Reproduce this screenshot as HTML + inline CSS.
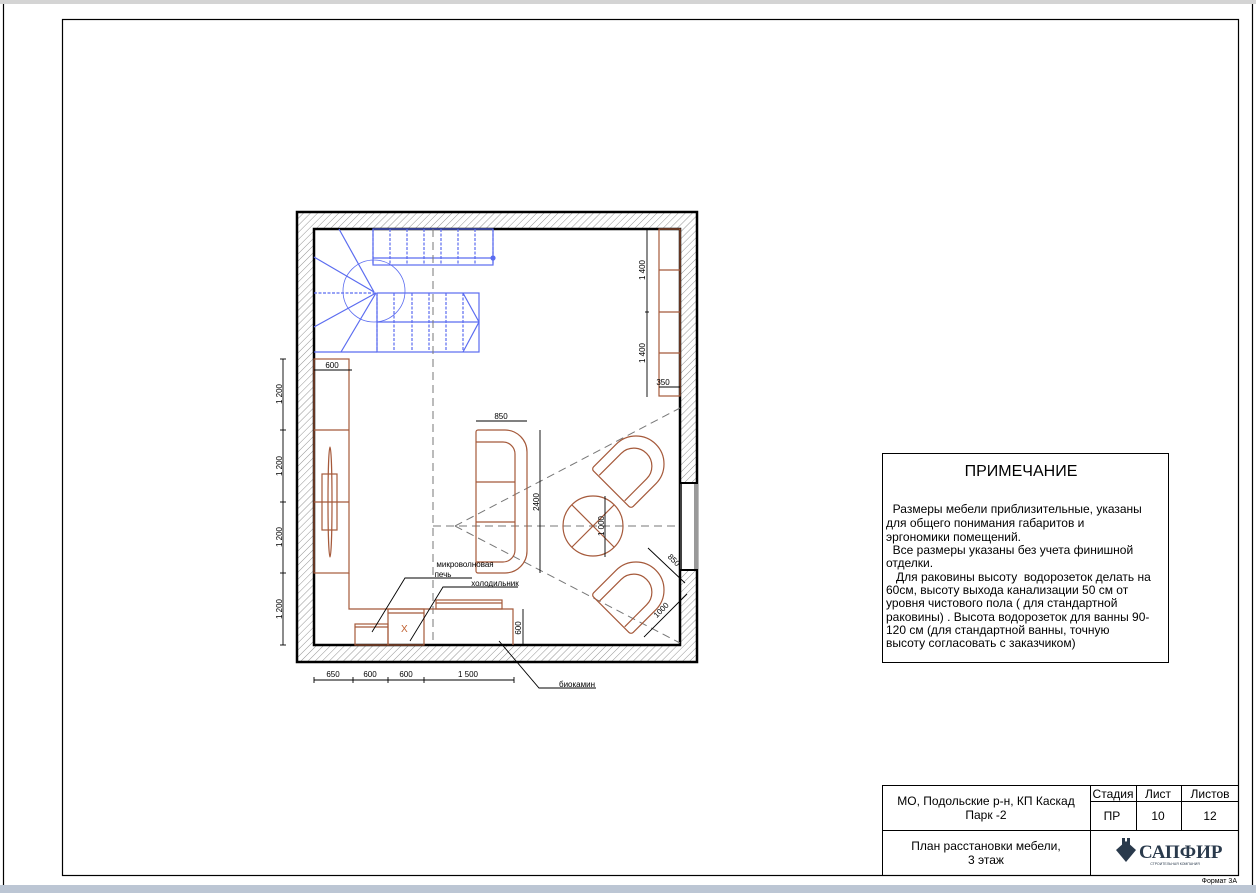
<!DOCTYPE html>
<html><head><meta charset="utf-8"><style>
html,body{margin:0;padding:0;background:#fff;}
svg{display:block;font-family:"Liberation Sans",Arial,sans-serif;}
</style></head><body>
<svg width="1256" height="893" viewBox="0 0 1256 893" xmlns="http://www.w3.org/2000/svg">
<defs>
<pattern id="h" width="5" height="5" patternUnits="userSpaceOnUse" patternTransform="rotate(45)">
<line x1="0" y1="0" x2="0" y2="5" stroke="#777" stroke-width="0.8"/>
</pattern>
</defs>
<rect x="0" y="0" width="1256" height="893" fill="#fff"/>
<rect x="0" y="0" width="1256" height="4" fill="#d4d4d4"/>
<rect x="0" y="885" width="1256" height="8" fill="#bcc6d4"/>
<line x1="3.5" y1="4" x2="3.5" y2="885" stroke="#000" stroke-width="1.2"/>
<line x1="1252.5" y1="4" x2="1252.5" y2="885" stroke="#000" stroke-width="1.2"/>
<rect x="62.5" y="19.5" width="1176" height="856" fill="none" stroke="#000" stroke-width="1.2"/>

<!-- walls -->
<path d="M296,211H698V663H296Z M314,229V645H680V229Z" fill="url(#h)" fill-rule="evenodd"/>
<rect x="297" y="212" width="400" height="450" fill="none" stroke="#000" stroke-width="2.5"/>
<rect x="314" y="229" width="366" height="416" fill="none" stroke="#000" stroke-width="2.5"/>
<rect x="680" y="483" width="18" height="87" fill="#fff"/>
<line x1="680" y1="483" x2="698" y2="483" stroke="#000" stroke-width="2"/>
<line x1="680" y1="570" x2="698" y2="570" stroke="#000" stroke-width="2"/>
<line x1="681" y1="483" x2="681" y2="570" stroke="#000" stroke-width="1.5"/>
<line x1="695" y1="483" x2="695" y2="570" stroke="#000" stroke-width="0.8"/>
<line x1="697" y1="483" x2="697" y2="570" stroke="#000" stroke-width="0.8"/>

<!-- stairs -->
<g stroke="#5b6cf0" stroke-width="1.2" fill="none">
<rect x="373" y="229" width="120" height="36"/>
<line x1="373" y1="258" x2="493" y2="258"/>
<g stroke-dasharray="3,1.5">
<line x1="390" y1="229" x2="390" y2="265"/><line x1="407" y1="229" x2="407" y2="265"/>
<line x1="424" y1="229" x2="424" y2="265"/><line x1="441" y1="229" x2="441" y2="265"/>
<line x1="458" y1="229" x2="458" y2="265"/><line x1="475" y1="229" x2="475" y2="265"/>
<line x1="373" y1="229" x2="373" y2="265"/><line x1="493" y1="229" x2="493" y2="265"/>
<line x1="377" y1="293" x2="377" y2="352"/><line x1="394" y1="293" x2="394" y2="352"/>
<line x1="412" y1="293" x2="412" y2="352"/><line x1="429" y1="293" x2="429" y2="352"/>
<line x1="446" y1="293" x2="446" y2="352"/><line x1="463" y1="293" x2="463" y2="352"/>
<line x1="314" y1="293" x2="377" y2="293"/>
</g>
<rect x="377" y="293" width="102" height="59"/>
<line x1="377" y1="322" x2="479" y2="322"/>
<path d="M463,293 L479,322 L463,352"/>
<line x1="314" y1="352" x2="377" y2="352"/>
<circle cx="374" cy="291" r="31" stroke-width="0.8"/>
<line x1="374" y1="292" x2="339" y2="229"/>
<line x1="374" y1="292" x2="314" y2="257"/>
<line x1="376" y1="293" x2="314" y2="327"/>
<line x1="376" y1="293" x2="341" y2="352"/>
<circle cx="493" cy="258" r="2" fill="#5b6cf0"/>
</g>

<!-- axes & view lines -->
<g stroke="#777" stroke-width="1" stroke-dasharray="8,5" fill="none">
<line x1="433" y1="229" x2="433" y2="645"/>
<line x1="433" y1="526" x2="680" y2="526"/>
<line x1="455" y1="526" x2="680" y2="408"/>
<line x1="455" y1="526" x2="680" y2="643"/>
</g>

<!-- furniture -->
<g stroke="#a5593a" stroke-width="1.2" fill="none">
<rect x="314" y="359" width="35" height="214"/>
<line x1="314" y1="430" x2="349" y2="430"/>
<line x1="314" y1="502" x2="349" y2="502"/>
<path d="M349,573 V609 H513 V645"/>
<rect x="322" y="474" width="15" height="56"/>
<ellipse cx="330" cy="502" rx="2" ry="55"/>
<rect x="355" y="624" width="33" height="21"/>
<line x1="355" y1="627" x2="388" y2="627"/>
<rect x="388" y="609" width="36" height="36"/>
<line x1="388" y1="613" x2="424" y2="613"/>
<rect x="436" y="600" width="66" height="9"/>
<line x1="436" y1="603" x2="502" y2="603"/>
<!-- sofa -->
<path d="M478,430 H505 A22,22 0 0 1 527,452 V551 A22,22 0 0 1 505,573 H478 A2,2 0 0 1 476,571 V432 A2,2 0 0 1 478,430 Z"/>
<path d="M476,442 H503 A12,12 0 0 1 515,454 V550 A12,12 0 0 1 503,562 H476"/>
<line x1="476" y1="482" x2="515" y2="482"/>
<line x1="476" y1="522" x2="515" y2="522"/>
<!-- table -->
<circle cx="593" cy="526" r="30"/>
<line x1="572" y1="505" x2="614" y2="547"/>
<line x1="614" y1="505" x2="572" y2="547"/>
<!-- chairs -->
<g transform="translate(636,464) rotate(-45)">
<path d="M-32,-28 H0 A28,28 0 0 1 0,28 H-32 A3,3 0 0 1 -35,25 V-25 A3,3 0 0 1 -32,-28 Z"/>
<path d="M-34,-18 H-3 A18,18 0 0 1 -3,18 H-34"/>
</g>
<g transform="translate(636,590) rotate(-45)">
<path d="M-32,-28 H0 A28,28 0 0 1 0,28 H-32 A3,3 0 0 1 -35,25 V-25 A3,3 0 0 1 -32,-28 Z"/>
<path d="M-34,-18 H-3 A18,18 0 0 1 -3,18 H-34"/>
</g>
<!-- shelving -->
<rect x="659" y="229" width="21" height="167"/>
<line x1="659" y1="270" x2="680" y2="270"/>
<line x1="659" y1="312" x2="680" y2="312"/>
<line x1="659" y1="353" x2="680" y2="353"/>
</g>
<text x="401" y="632" font-size="10" fill="#c06030">X</text>

<!-- dimensions -->
<g stroke="#000" stroke-width="0.9" fill="none">
<line x1="283" y1="359" x2="283" y2="645"/>
<line x1="280" y1="359" x2="286" y2="359"/><line x1="280" y1="430" x2="286" y2="430"/>
<line x1="280" y1="502" x2="286" y2="502"/><line x1="280" y1="573" x2="286" y2="573"/>
<line x1="280" y1="645" x2="286" y2="645"/>
<line x1="314" y1="680" x2="514" y2="680"/>
<line x1="314" y1="677" x2="314" y2="683"/><line x1="353" y1="677" x2="353" y2="683"/>
<line x1="388" y1="677" x2="388" y2="683"/><line x1="424" y1="677" x2="424" y2="683"/>
<line x1="514" y1="677" x2="514" y2="683"/>
<line x1="314" y1="370" x2="352" y2="370"/>
<line x1="647" y1="229" x2="647" y2="397"/>
<line x1="645" y1="312" x2="649" y2="312"/>
<line x1="659" y1="387" x2="680" y2="387"/>
<line x1="476" y1="421" x2="527" y2="421"/>
<line x1="540" y1="430" x2="540" y2="573"/>
<line x1="605" y1="496" x2="605" y2="557"/>
<line x1="523" y1="609" x2="523" y2="645"/>
<line x1="648" y1="548" x2="685" y2="583"/>
<line x1="687" y1="594" x2="644" y2="637"/>
<!-- leaders -->
<path d="M472,578 H405 L372,632"/>
<path d="M518,587 H443 L410,641"/>
<path d="M499,641 L539,688 H596"/>
</g>
<g font-size="8" fill="#000">
<text x="332" y="368" text-anchor="middle">600</text>
<text x="663" y="385" text-anchor="middle">350</text>
<text x="501" y="419" text-anchor="middle">850</text>
<text x="333" y="677" text-anchor="middle">650</text>
<text x="370" y="677" text-anchor="middle">600</text>
<text x="406" y="677" text-anchor="middle">600</text>
<text x="468" y="677" text-anchor="middle">1 500</text>
<text x="465" y="567" text-anchor="middle">микроволновая</text>
<text x="443" y="577" text-anchor="middle">печь</text>
<text x="495" y="586" text-anchor="middle">холодильник</text>
<text x="577" y="687" text-anchor="middle">биокамин</text>
<text transform="translate(282,394) rotate(-90)" text-anchor="middle">1 200</text>
<text transform="translate(282,466) rotate(-90)" text-anchor="middle">1 200</text>
<text transform="translate(282,537) rotate(-90)" text-anchor="middle">1 200</text>
<text transform="translate(282,609) rotate(-90)" text-anchor="middle">1 200</text>
<text transform="translate(645,270) rotate(-90)" text-anchor="middle">1 400</text>
<text transform="translate(645,353) rotate(-90)" text-anchor="middle">1 400</text>
<text transform="translate(539,502) rotate(-90)" text-anchor="middle">2400</text>
<text transform="translate(604,526) rotate(-90)" text-anchor="middle">1 000</text>
<text transform="translate(521,628) rotate(-90)" text-anchor="middle">600</text>
<text transform="translate(672,562) rotate(45)" text-anchor="middle">850</text>
<text transform="translate(663,612) rotate(-45)" text-anchor="middle">1000</text>
</g>

<!-- notes -->
<rect x="882.5" y="453.5" width="286" height="209" fill="none" stroke="#000" stroke-width="1"/>
<text x="1021" y="476" font-size="16" text-anchor="middle">ПРИМЕЧАНИЕ</text>
<g font-size="12" fill="#000">
<text x="886" y="513" xml:space="preserve">  Размеры мебели приблизительные, указаны</text>
<text x="886" y="527">для общего понимания габаритов и</text>
<text x="886" y="541">эргономики помещений.</text>
<text x="886" y="554" xml:space="preserve">  Все размеры указаны без учета финишной</text>
<text x="886" y="567">отделки.</text>
<text x="886" y="581" xml:space="preserve">   Для раковины высоту  водорозеток делать на</text>
<text x="886" y="594">60см,  высоту выхода канализации 50 см от</text>
<text x="886" y="607">уровня чистового пола ( для стандартной</text>
<text x="886" y="621">раковины) . Высота водорозеток для ванны 90-</text>
<text x="886" y="634">120 см (для стандартной ванны, точную</text>
<text x="886" y="647">высоту согласовать с заказчиком)</text>
</g>

<!-- title block -->
<g stroke="#000" stroke-width="1" fill="none">
<rect x="882.5" y="785.5" width="356" height="90"/>
<line x1="1090.5" y1="785" x2="1090.5" y2="876"/>
<line x1="882" y1="830.5" x2="1239" y2="830.5"/>
<line x1="1090" y1="801.5" x2="1239" y2="801.5"/>
<line x1="1136.5" y1="785" x2="1136.5" y2="830"/>
<line x1="1181.5" y1="785" x2="1181.5" y2="830"/>
</g>
<g font-size="12" fill="#000" text-anchor="middle">
<text x="986" y="805">МО, Подольские р-н, КП Каскад</text>
<text x="986" y="819">Парк -2</text>
<text x="986" y="850">План расстановки мебели,</text>
<text x="986" y="864">3 этаж</text>
<text x="1113" y="798">Стадия</text>
<text x="1158" y="798">Лист</text>
<text x="1210" y="798">Листов</text>
<text x="1112" y="820">ПР</text>
<text x="1158" y="820">10</text>
<text x="1210" y="820">12</text>
</g>
<g fill="#2a3a4c">
<path d="M1116,850 L1126,841 L1136,850 L1126,862 Z"/>
<rect x="1122" y="838" width="3" height="14"/>
<rect x="1127" y="838" width="3" height="14"/>
</g>
<text x="1139" y="858" font-size="19" font-weight="bold" font-family="Liberation Serif,serif" fill="#2a3a4c">САПФИР</text>
<text x="1175" y="865" font-size="3.5" text-anchor="middle" fill="#2a3a4c">СТРОИТЕЛЬНАЯ КОМПАНИЯ</text>
<text x="1237" y="883" font-size="7" text-anchor="end" fill="#000">Формат 3А</text>
</svg>
</body></html>
